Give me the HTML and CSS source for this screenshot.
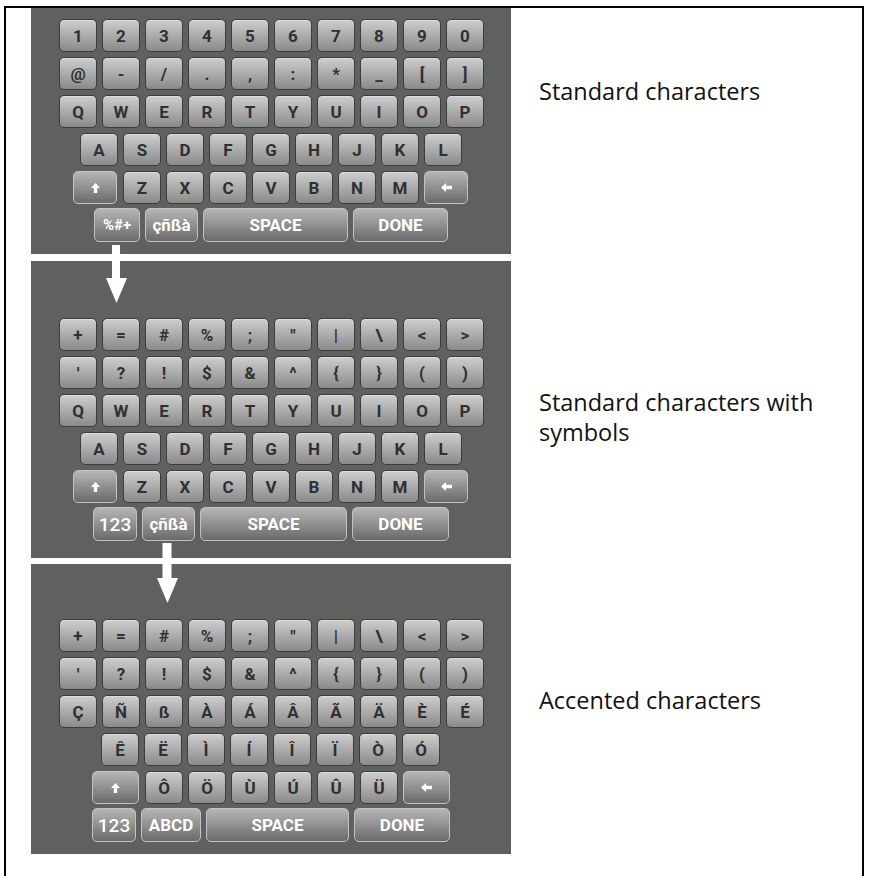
FILE: index.html
```html
<!DOCTYPE html>
<html>
    <head>
        <title>On-screen keyboard layouts</title>
        <link rel="stylesheet" href="styles.css">
    </head>
    <body>
        <div class="frame">

            <!-- standard -->
            <div class="section">
                <div class="kb kb1">
                    <div class="row r-full">
                        <span class="key">1</span><span class="key">2</span><span class="key">3</span><span class="key">4</span><span class="key">5</span>
                        <span class="key">6</span><span class="key">7</span><span class="key">8</span><span class="key">9</span><span class="key">0</span>
                    </div>
                    <div class="row r-full">
                        <span class="key">@</span><span class="key">-</span><span class="key">/</span><span class="key">.</span><span class="key">,</span>
                        <span class="key">:</span><span class="key">*</span><span class="key">_</span><span class="key">[</span><span class="key">]</span>
                    </div>
                    <div class="row r-full">
                        <span class="key">Q</span><span class="key">W</span><span class="key">E</span><span class="key">R</span><span class="key">T</span>
                        <span class="key">Y</span><span class="key">U</span><span class="key">I</span><span class="key">O</span><span class="key">P</span>
                    </div>
                    <div class="row r-half">
                        <span class="key">A</span><span class="key">S</span><span class="key">D</span><span class="key">F</span><span class="key">G</span>
                        <span class="key">H</span><span class="key">J</span><span class="key">K</span><span class="key">L</span>
                    </div>
                    <div class="row r-shift">
                        <span class="key fn w44 sh"><svg width="9" height="10" viewBox="0 0 9 10"><path d="M4.5 0 L9 5 L6.2 5 L6.2 10 L2.8 10 L2.8 5 L0 5 Z" fill="#fff"/></svg></span>
                        <span class="key">Z</span><span class="key">X</span><span class="key">C</span><span class="key">V</span>
                        <span class="key">B</span><span class="key">N</span><span class="key">M</span>
                        <span class="key fn w44"><svg width="11" height="9" viewBox="0 0 11 9"><path d="M0 4.5 L5 0 L5 2.8 L11 2.8 L11 6.2 L5 6.2 L5 9 Z" fill="#fff"/></svg></span>
                    </div>
                    <div class="row row-fn r-fn1">
                        <span class="key fn w46 small">%#+</span>
                        <span class="key fn w53">çñßà</span>
                        <span class="key fn w145">SPACE</span>
                        <span class="key fn w95">DONE</span>
                    </div>
                </div>
                <p class="label l1">Standard characters</p>
            </div>

            <!-- symbols -->
            <div class="section">
                <div class="kb kb2">
                    <div class="row r-full">
                        <span class="key">+</span><span class="key">=</span><span class="key">#</span><span class="key">%</span><span class="key">;</span>
                        <span class="key">"</span><span class="key">|</span><span class="key">\</span><span class="key">&lt;</span><span class="key">&gt;</span>
                    </div>
                    <div class="row r-full">
                        <span class="key">'</span><span class="key">?</span><span class="key">!</span><span class="key">$</span><span class="key">&amp;</span>
                        <span class="key">^</span><span class="key">{</span><span class="key">}</span><span class="key">(</span><span class="key">)</span>
                    </div>
                    <div class="row r-full">
                        <span class="key">Q</span><span class="key">W</span><span class="key">E</span><span class="key">R</span><span class="key">T</span>
                        <span class="key">Y</span><span class="key">U</span><span class="key">I</span><span class="key">O</span><span class="key">P</span>
                    </div>
                    <div class="row r-half">
                        <span class="key">A</span><span class="key">S</span><span class="key">D</span><span class="key">F</span><span class="key">G</span>
                        <span class="key">H</span><span class="key">J</span><span class="key">K</span><span class="key">L</span>
                    </div>
                    <div class="row r-shift">
                        <span class="key fn w44 sh"><svg width="9" height="10" viewBox="0 0 9 10"><path d="M4.5 0 L9 5 L6.2 5 L6.2 10 L2.8 10 L2.8 5 L0 5 Z" fill="#fff"/></svg></span>
                        <span class="key">Z</span><span class="key">X</span><span class="key">C</span><span class="key">V</span>
                        <span class="key">B</span><span class="key">N</span><span class="key">M</span>
                        <span class="key fn w44"><svg width="11" height="9" viewBox="0 0 11 9"><path d="M0 4.5 L5 0 L5 2.8 L11 2.8 L11 6.2 L5 6.2 L5 9 Z" fill="#fff"/></svg></span>
                    </div>
                    <div class="row row-fn r-fn2">
                        <span class="key fn w44 big">123</span>
                        <span class="key fn w53">çñßà</span>
                        <span class="key fn w147">SPACE</span>
                        <span class="key fn w97">DONE</span>
                    </div>
                </div>
                <p class="label l2">Standard characters with<br>symbols</p>
            </div>

            <!-- accented -->
            <div class="section">
                <div class="kb kb3">
                    <div class="row r-full">
                        <span class="key">+</span><span class="key">=</span><span class="key">#</span><span class="key">%</span><span class="key">;</span>
                        <span class="key">"</span><span class="key">|</span><span class="key">\</span><span class="key">&lt;</span><span class="key">&gt;</span>
                    </div>
                    <div class="row r-full">
                        <span class="key">'</span><span class="key">?</span><span class="key">!</span><span class="key">$</span><span class="key">&amp;</span>
                        <span class="key">^</span><span class="key">{</span><span class="key">}</span><span class="key">(</span><span class="key">)</span>
                    </div>
                    <div class="row r-full">
                        <span class="key">Ç</span><span class="key">Ñ</span><span class="key">ß</span><span class="key">À</span><span class="key">Á</span>
                        <span class="key">Â</span><span class="key">Ã</span><span class="key">Ä</span><span class="key">È</span><span class="key">É</span>
                    </div>
                    <div class="row r-col2">
                        <span class="key">Ê</span><span class="key">Ë</span><span class="key">Ì</span><span class="key">Í</span>
                        <span class="key">Î</span><span class="key">Ï</span><span class="key">Ò</span><span class="key">Ó</span>
                    </div>
                    <div class="row r-shift3">
                        <span class="key fn w47 sh"><svg width="9" height="10" viewBox="0 0 9 10"><path d="M4.5 0 L9 5 L6.2 5 L6.2 10 L2.8 10 L2.8 5 L0 5 Z" fill="#fff"/></svg></span>
                        <span class="key">Ô</span><span class="key">Ö</span><span class="key">Ù</span>
                        <span class="key">Ú</span><span class="key">Û</span><span class="key">Ü</span>
                        <span class="key fn w47"><svg width="11" height="9" viewBox="0 0 11 9"><path d="M0 4.5 L5 0 L5 2.8 L11 2.8 L11 6.2 L5 6.2 L5 9 Z" fill="#fff"/></svg></span>
                    </div>
                    <div class="row row-fn r-shift3">
                        <span class="key fn w44 big">123</span>
                        <span class="key fn w60">ABCD</span>
                        <span class="key fn w143">SPACE</span>
                        <span class="key fn w96">DONE</span>
                    </div>
                </div>
                <p class="label l3">Accented characters</p>
            </div>

            <!-- arrows between the layouts -->
            <svg class="arrow a1" width="21" height="58" viewBox="0 0 21 58">
                <rect x="6" y="0" width="8" height="34" fill="#fff"/>
                <polygon points="0,33 21,33 10.5,58" fill="#fff"/>
            </svg>
            <svg class="arrow a2" width="21" height="60" viewBox="0 0 21 60">
                <rect x="5.5" y="0" width="9" height="36" fill="#fff"/>
                <polygon points="0,35 21,35 10.5,60" fill="#fff"/>
            </svg>
        </div>
    </body>
</html>
```

FILE: styles.css
```css
html {
    overflow: hidden;
}

body {
    background-color: white;
    margin: 0;
}

.frame {
    border: 2px solid black;
    border-bottom: none;
    box-sizing: border-box;
    display: flex;
    flex-direction: column;
    gap: 6px;
    height: 870px;
    margin: 6px 0 0 4px;
    padding-left: 25px;
    position: relative;
    width: 860px;
}

.section {
    display: flex;
    gap: 28px;
}

.section:first-child {
    margin-bottom: 1px;
}

.kb {
    background-color: #5f615f;
    box-sizing: border-box;
    display: flex;
    flex-direction: column;
    gap: 5px;
    width: 480px;
}

.kb1 {
    height: 246px;
    padding-top: 11px;
}

.kb2 {
    height: 297px;
    padding-top: 57px;
}

.kb3 {
    height: 290px;
    padding-top: 55px;
}

.row {
    display: flex;
    gap: 5px;
}

.row-fn {
    margin-top: -1px;
}

.r-full {
    padding-left: 28px;
}

.r-half {
    padding-left: 49px;
}

.r-shift {
    padding-left: 42px;
}

.r-col2 {
    padding-left: 70px;
}

.r-shift3 {
    padding-left: 61px;
}

.r-fn1 {
    padding-left: 63px;
}

.r-fn2 {
    padding-left: 62px;
}

.key {
    align-items: center;
    background: linear-gradient(#cecece, #8a8a8a);
    border: 1px solid #3b3d3b;
    border-radius: 5px;
    box-shadow: inset 0 1px 0 rgba(255, 255, 255, 0.35);
    box-sizing: border-box;
    color: #303030;
    display: flex;
    font-family: Roboto, "Liberation Sans", sans-serif;
    font-size: 17px;
    font-weight: bold;
    height: 33px;
    justify-content: center;
    width: 38px;
}

.fn {
    background: linear-gradient(#b6b6b6, #6a6a6a);
    border-color: #c2c2c2;
    box-shadow: none;
    color: white;
    font-size: 17px;
}

.row-fn .key {
    height: 34px;
}

.small {
    font-size: 15px;
}

.big {
    font-size: 19px;
    font-weight: 500;
}

.w44 { width: 44px; }
.w46 { width: 46px; }
.w47 { width: 47px; }
.w53 { width: 53px; }
.w60 { width: 60px; }
.w95 { width: 95px; }
.w96 { width: 96px; }
.w97 { width: 97px; }
.w143 { width: 143px; }
.w145 { width: 145px; }
.w147 { width: 147px; }

.sh {
    margin-right: 1px;
}

.label {
    color: #111;
    font-family: "Open Sans", "Noto Sans", sans-serif;
    font-size: 23.5px;
    line-height: 30px;
    margin-bottom: 0;
}

.l1 {
    margin-top: 68px;
}

.l2 {
    margin-top: 126px;
}

.l3 {
    margin-top: 121px;
}

.arrow {
    position: absolute;
}

.a1 {
    left: 100px;
    top: 237px;
}

.a2 {
    left: 151px;
    top: 535px;
}
```
